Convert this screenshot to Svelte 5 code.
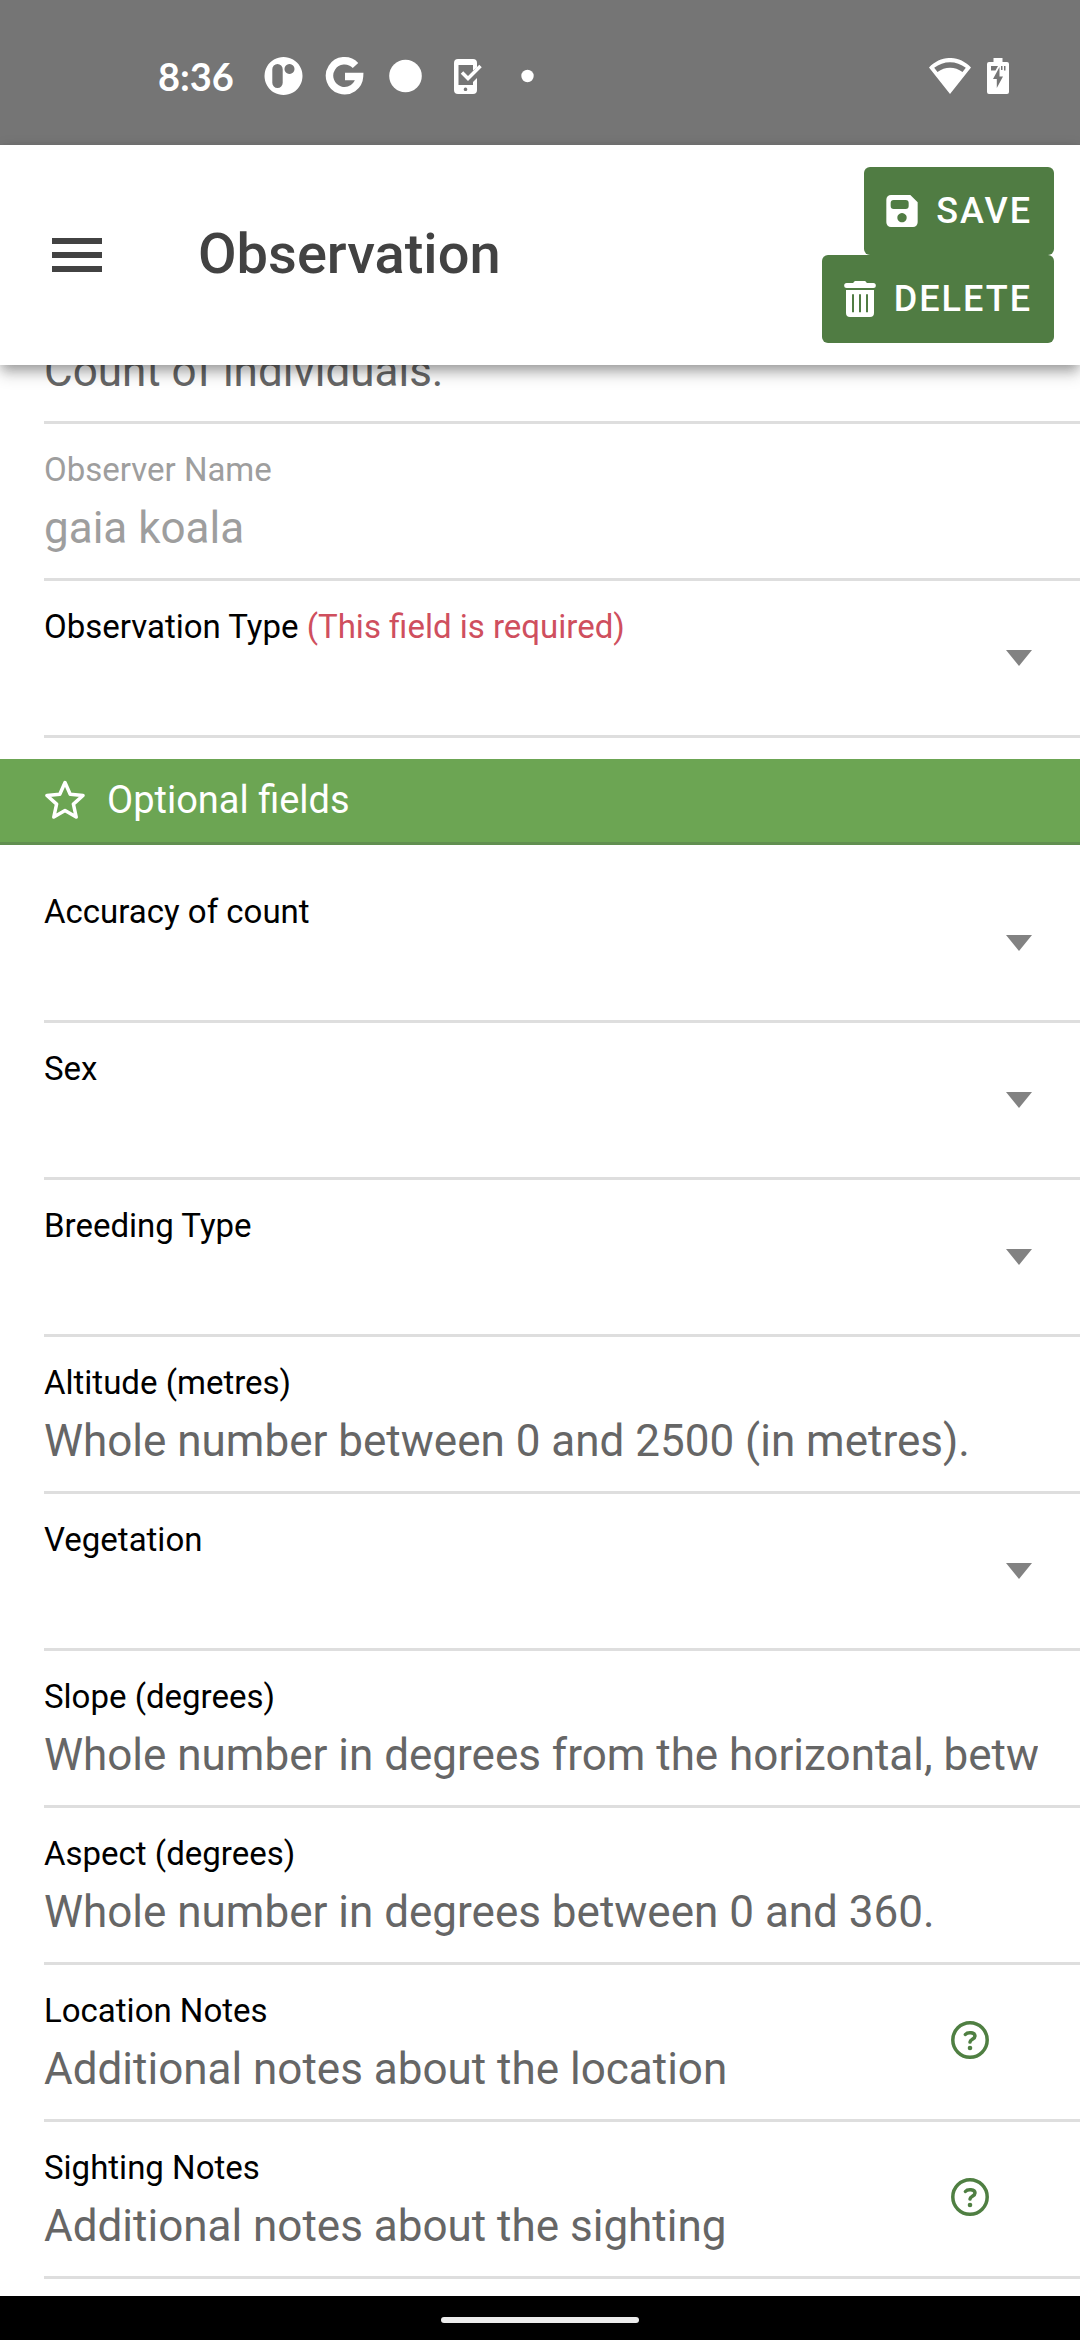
<script>
  import { onMount } from 'svelte';

  const required = [
    { id: 'count', name: 'Count', kind: 'text', hint: 'Count of individuals.' },
    { id: 'observer', label: 'Observer Name', kind: 'text', value: 'gaia koala', disabled: true },
    { id: 'type', label: 'Observation Type', kind: 'select', error: '(This field is required)' }
  ];

  const optional = [
    { id: 'accuracy', label: 'Accuracy of count', kind: 'select' },
    { id: 'sex', label: 'Sex', kind: 'select' },
    { id: 'breeding', label: 'Breeding Type', kind: 'select' },
    { id: 'altitude', label: 'Altitude (metres)', kind: 'text', hint: 'Whole number between 0 and 2500 (in metres).' },
    { id: 'vegetation', label: 'Vegetation', kind: 'select' },
    { id: 'slope', label: 'Slope (degrees)', kind: 'text', hint: 'Whole number in degrees from the horizontal, between 0 and 90.' },
    { id: 'aspect', label: 'Aspect (degrees)', kind: 'text', hint: 'Whole number in degrees between 0 and 360.' },
    { id: 'location', label: 'Location Notes', kind: 'text', hint: 'Additional notes about the location', help: true },
    { id: 'sighting', label: 'Sighting Notes', kind: 'text', hint: 'Additional notes about the sighting', help: true }
  ];

  let content;

  // Open the form with the count field partly scrolled under the header.
  onMount(() => {
    content.scrollTop = 46;
  });
</script>

{#snippet field(f)}
  <div class="field" class:choice={f.kind === 'select'} class:disabled={f.disabled}>
    <div class="body">
      {#if f.label}
        <label for={f.id}>{f.label}{#if f.error}{' '}<span class="error">{f.error}</span>{/if}</label>
      {/if}
      {#if f.kind === 'select'}
        <select id={f.id}><option value=""></option></select>
      {:else}
        <input id={f.id} type="text" aria-label={f.name} value={f.value ?? ''} placeholder={f.hint ?? ''} disabled={f.disabled} />
      {/if}
    </div>
    {#if f.kind === 'select'}
      <svg class="caret" viewBox="0 0 26 16" aria-hidden="true"><path d="M0 0h26L13 16z" /></svg>
    {/if}
    {#if f.help}
      <button class="help" type="button" aria-label="Help for {f.label}">
        <svg viewBox="0 0 38 38" aria-hidden="true">
          <circle cx="19" cy="19" r="17.2" />
          <path d="M14.4 13.5c2-2.4 9.6-2.5 9.6 1.6 0 3.2-4.8 3.2-5 6" />
          <circle class="point" cx="19" cy="27" r="2.3" />
        </svg>
      </button>
    {/if}
  </div>
{/snippet}

<div class="app">
  <div class="status">
    <span class="time">8:36</span>
    <div class="notices" aria-hidden="true">
      <svg viewBox="0 0 61 40"><path fill-rule="evenodd" d="M30.5 1a19 19 0 1 0 .01 0zM24.5 8a5.2 5.2 0 0 1 5.2 5.2v13.6a5.2 5.2 0 0 1-10.4 0V13.2A5.2 5.2 0 0 1 24.5 8zM36.5 8a5 5 0 1 1-.01 0z" /></svg>
      <svg viewBox="0 0 61 40"><path class="g" d="M41.5 9.5A15 15 0 1 0 45.5 20.500H31" /></svg>
      <svg viewBox="0 0 61 40"><circle cx="30.5" cy="20" r="16.3" /></svg>
      <svg viewBox="0 0 61 40">
        <path fill-rule="evenodd" d="M22 3h15a4 4 0 0 1 4 4v4.5l-4 3V9H22.5v20H37v-3l4-4v12a4 4 0 0 1-4 4H22a4 4 0 0 1-4-4V7a4 4 0 0 1 4-4zM29.5 31.5a1.8 1.8 0 1 0 .01 0z" />
        <path class="tick" d="M26 16.500l6 6L44.500 10" />
      </svg>
      <svg viewBox="0 0 61 40"><circle cx="30.5" cy="20" r="6.2" /></svg>
    </div>
    <div class="radios" aria-hidden="true">
      <svg class="wifi" viewBox="0 0 42 36"><path fill-rule="evenodd" d="M21 36L0 9.500C12-3.200 30-3.200 42 9.500zM5.200 9.800l3.300 4.200c7.500-5.800 17.500-5.800 25 0l3.300-4.200C27.500 2.300 14.500 2.300 5.200 9.800z" /></svg>
      <svg class="battery" viewBox="0 0 22 36"><path fill-rule="evenodd" d="M6.500 0h9v4H20a2 2 0 0 1 2 2v28a2 2 0 0 1-2 2H2a2 2 0 0 1-2-2V6a2 2 0 0 1 2-2h4.500zM4 8v4.500h4.500L11 8zM14 8v4h1.500V8zM17 8v4.500h1.500V8zM12.500 9L6 21h3.800v9L16 18.500h-3.500z" /></svg>
    </div>
  </div>

  <header>
    <button class="menu" type="button" aria-label="Menu">
      <svg viewBox="0 0 50 34" aria-hidden="true"><path d="M0 0h50v6H0zM0 14h50v6H0zM0 28h50v6H0z" /></svg>
    </button>
    <h1>Observation</h1>
    <div class="actions">
      <button class="action" type="button">
        <svg class="save" viewBox="0 0 94 96" aria-hidden="true"><path fill-rule="evenodd" d="M14 0h58l22 22v60a14 14 0 0 1-14 14H14A14 14 0 0 1 0 82V14A14 14 0 0 1 14 0zM22 15a9 9 0 0 0-9 9v9a9 9 0 0 0 9 9h36a9 9 0 0 0 9-9v-9a9 9 0 0 0-9-9zM47 54a14 14 0 1 0 .01 0z" /></svg>
        Save
      </button>
      <button class="action" type="button">
        <svg class="trash" viewBox="0 0 96 108" aria-hidden="true"><path fill-rule="evenodd" d="M8 6h20c1-4 4-6 8-6h24c4 0 7 2 8 6h20a7.500 7.500 0 0 1 0 15H8A7.500 7.500 0 0 1 8 6zM6 27h84v69a12 12 0 0 1-12 12H18A12 12 0 0 1 6 96zM24 40v54h6V40zM45 40v54h6V40zM66 40v54h6V40z" /></svg>
        Delete
      </button>
    </div>
  </header>

  <main bind:this={content}>
    <form>
      {#each required as f (f.id)}
        {@render field(f)}
      {/each}
      <h2>
        <svg viewBox="0 0 40 40" aria-hidden="true"><path d="M20 2.500l5.200 11.700 12.800 1.300-9.600 8.600 2.800 12.900L20 30.500 8.800 37l2.800-12.900L2 15.500l12.800-1.300z" /></svg>
        Optional fields
      </h2>
      {#each optional as f (f.id)}
        {@render field(f)}
      {/each}
    </form>
  </main>

  <div class="navigation"><span class="pill"></span></div>
</div>

<style>
  :global(body) {
    margin: 0;
    background: #fff;
  }

  .app {
    display: flex;
    flex-direction: column;
    height: 100vh;
    font-family: Roboto, 'Liberation Sans', sans-serif;
    color: #000;
    background: #fff;
  }

  button,
  input,
  select {
    margin: 0;
    padding: 0;
    border: 0;
    border-radius: 0;
    background: none;
    font: inherit;
    color: inherit;
    appearance: none;
  }

  svg {
    display: block;
    flex: none;
  }

  .status {
    display: flex;
    flex: none;
    align-items: center;
    box-sizing: border-box;
    height: 145px;
    padding: 6px 71px 0 158px;
    color: #fff;
    background: #757575;
  }

  .status svg {
    fill: currentColor;
  }

  .time {
    width: 95px;
    font-family: Lato, sans-serif;
    font-size: 38px;
    font-weight: 700;
    line-height: 48px;
  }

  .notices {
    display: flex;
  }

  .notices svg {
    width: 61px;
    height: 40px;
  }

  .status .g {
    fill: none;
    stroke: currentColor;
    stroke-width: 7.5;
  }

  .status .tick {
    fill: none;
    stroke: currentColor;
    stroke-width: 3.5;
  }

  .radios {
    display: flex;
    gap: 16px;
    margin-left: auto;
  }

  .wifi {
    width: 42px;
    height: 36px;
  }

  .battery {
    width: 22px;
    height: 36px;
  }

  header {
    display: flex;
    flex: none;
    align-items: center;
    z-index: 1;
    padding: 22px 26px 22px 52px;
    background: #fff;
    box-shadow:
      0 6px 11px -3px rgba(0, 0, 0, 0.24),
      0 11px 14px rgba(0, 0, 0, 0.14),
      0 3px 14px rgba(0, 0, 0, 0.12);
  }

  .menu svg {
    width: 50px;
    height: 34px;
    fill: #424242;
  }

  h1 {
    flex: 1;
    margin: 0 0 0 96px;
    padding-bottom: 2px;
    font-size: 56px;
    font-weight: 500;
    line-height: 66px;
    color: #424242;
  }

  .actions {
    display: flex;
    flex-direction: column;
    align-items: flex-end;
  }

  .action {
    display: flex;
    align-items: center;
    gap: 18px;
    height: 88px;
    padding: 0 22px;
    border-radius: 6px;
    font-size: 36px;
    font-weight: 500;
    letter-spacing: 2px;
    text-transform: uppercase;
    color: #fff;
    background: #507c43;
  }

  .action svg {
    fill: currentColor;
  }

  .save {
    width: 32px;
    height: 32px;
  }

  .trash {
    width: 32px;
    height: 36px;
  }

  main {
    flex: 1;
    min-height: 0;
    overflow-y: auto;
    scrollbar-width: none;
  }

  form {
    padding-bottom: 44px;
  }

  .field {
    display: flex;
    align-items: center;
    margin-left: 44px;
    padding-right: 42px;
    border-bottom: 3px solid #dedede;
  }

  .body {
    display: flex;
    flex: 1;
    flex-direction: column;
    gap: 12px;
    min-width: 0;
    padding: 26px 0 24px;
  }

  label {
    font-size: 33px;
    line-height: 40px;
  }

  .error {
    color: #cf4f5e;
  }

  input,
  select {
    width: 100%;
    height: 52px;
    font-size: 44px;
    line-height: 52px;
    outline: 0;
  }

  input::placeholder {
    color: #666;
    opacity: 1;
  }

  .disabled {
    color: #9e9e9e;
  }

  .choice {
    padding-right: 48px;
  }

  .caret {
    width: 26px;
    height: 16px;
    fill: #828282;
  }

  .help {
    padding: 0 49px 4px;
    color: #4f7f42;
  }

  .help svg {
    width: 38px;
    height: 38px;
    fill: none;
    stroke: currentColor;
    stroke-width: 3.5;
    stroke-linecap: round;
  }

  .help .point {
    fill: currentColor;
    stroke: none;
  }

  h2 {
    display: flex;
    align-items: center;
    gap: 22px;
    box-sizing: border-box;
    height: 86px;
    margin: 21px 0;
    padding: 0 45px 2px;
    border-bottom: 3px solid #618f50;
    font-size: 38px;
    font-weight: 400;
    line-height: 46px;
    color: #fff;
    background: #6ca553;
  }

  h2 svg {
    width: 40px;
    height: 40px;
    fill: none;
    stroke: currentColor;
    stroke-width: 3.5;
    stroke-linejoin: round;
  }

  .navigation {
    display: flex;
    flex: none;
    align-items: center;
    justify-content: center;
    box-sizing: border-box;
    z-index: 1;
    height: 44px;
    padding-top: 4px;
    background: #000;
  }

  .pill {
    width: 198px;
    height: 6px;
    border-radius: 3px;
    background: #ececec;
  }
</style>
